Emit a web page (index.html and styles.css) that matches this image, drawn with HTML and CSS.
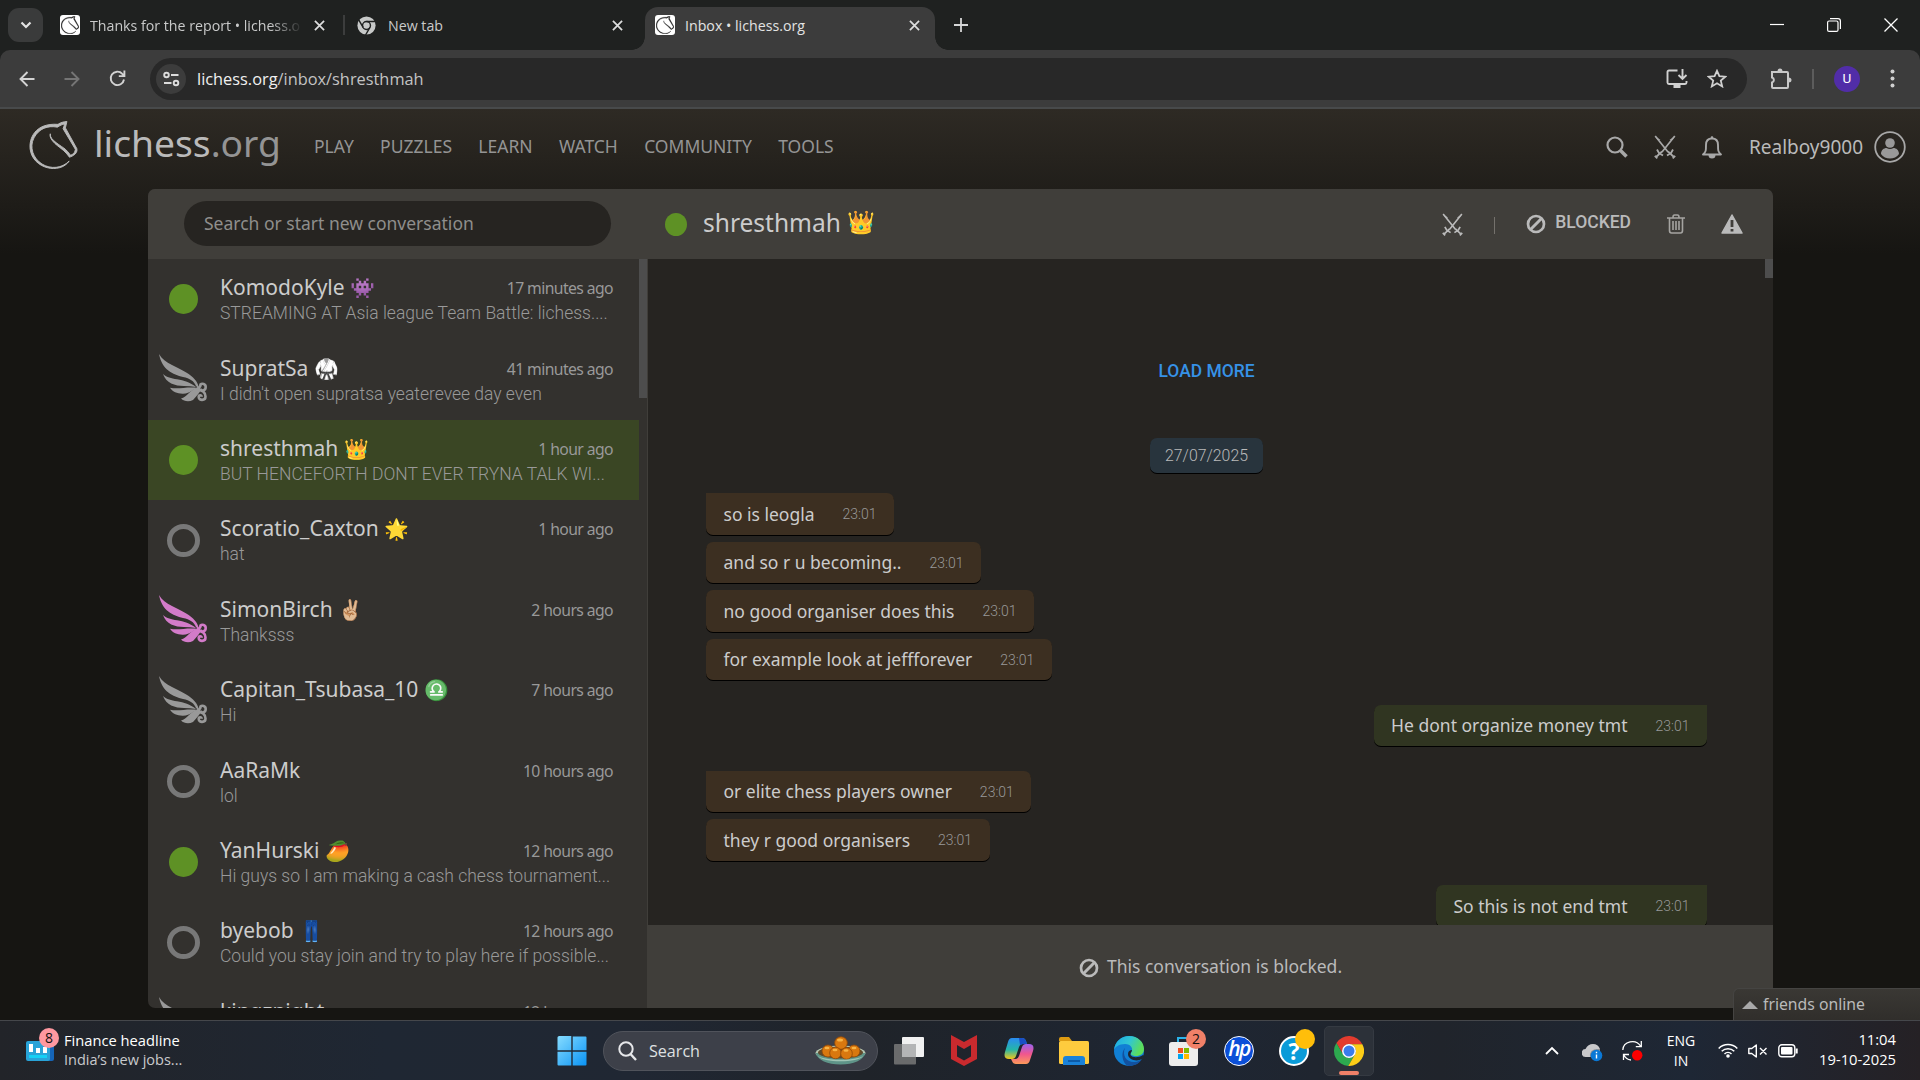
FILE: index.html
```html
<!DOCTYPE html>
<html lang="en">
<head>
<meta charset="utf-8">
<title>Inbox • lichess.org</title>
<link rel="stylesheet" href="styles.css">
</head>
<body>
<svg class="defs" aria-hidden="true">
  <symbol id="horse" viewBox="0 0 50 50"><path stroke-linejoin="round" d="M38.956.5c-3.53.418-6.452.902-9.286 2.984C5.534 1.786-.692 18.533.68 29.364 3.493 50.214 31.918 55.785 41.329 41.7c-7.444 7.696-19.276 8.752-28.323 3.084C3.959 39.116-.506 27.392 4.683 17.567 9.873 7.742 18.996 4.535 29.03 6.405c2.43-1.418 5.225-3.22 7.655-3.187l-1.694 4.86 12.752 21.37c-.439 5.654-5.459 6.112-5.459 6.112-.574-1.47-1.634-2.942-4.842-6.036-3.207-3.094-17.465-10.177-15.788-16.207-2.001 6.967 10.311 14.152 14.04 17.663 3.73 3.51 5.426 6.04 5.795 6.756 0 0 9.392-2.504 7.838-8.927L37.4 7.171z"/></symbol>
  <symbol id="x" viewBox="0 0 12 12"><path d="M1 1l10 10M11 1L1 11" fill="none" stroke="currentColor" stroke-width="1.9"/></symbol>
  <symbol id="swords" viewBox="0 0 22 24"><path d="M1.200 1L14 17M20.800 1L8 17" fill="none" stroke="currentColor" stroke-width="1.700"/><path d="M1 1l5.500 4L3.500 5zM21 1l-5.500 4 3 0z" fill="currentColor"/><path d="M3 14.500l2 3.500 4 2.500M19 14.500l-2 3.500-4 2.500M8 16.500l-6.500 6M14 16.500l6.500 6M.800 20.800l2.500 2.500M21.200 20.800l-2.500 2.500" fill="none" stroke="currentColor" stroke-width="1.800"/></symbol>
  <symbol id="ban" viewBox="0 0 20 20"><circle cx="10" cy="10" r="8" fill="none" stroke="currentColor" stroke-width="2.700"/><path d="M4.800 15.200L15.200 4.800" stroke="currentColor" stroke-width="3"/></symbol>
  <symbol id="wing" viewBox="0 0 49 48"><g fill="currentColor"><path d="M0 0c3 5 7 8 13 11 8 4 16 7.500 21 12.500 4 4 5 6 6 11l-3-2.500c-2-5-6-7.500-13-9C14 20.500 3 16 0 0z"/><path d="M4 20c4 3.500 8 4.300 14 5.300 7 1.200 13 3 19 7.700-4-.8-8-1-12-1-9 0-18-3-21-12z"/><path d="M11 33.800c9 1.700 17-1.300 28 .2-5 .7-7 5.500-15 5.700-6 .1-10-1.700-13-5.900z"/><path d="M22 44.500c6-1.500 9-9 17-11l3 2.500c-2 3-5 7-8 10-4 2-9 1.500-12-1.500z"/></g><path d="M38 34.800c1.500-.8 4-1.800 3.500-4.300 1.500-1.500 5.200-.8 5.200 2.500 0 4-5 4.500-5.200 1.500M38 35.500c5 .5 8.500 3 8.500 7 0 4.500-6.800 4.300-6.800.5 0-2.200 3-2.200 3-.3" fill="none" stroke="currentColor" stroke-width="2.600"/></symbol>
</svg>

<header class="tabs">
  <button class="tab-search"><svg width="12" height="8" viewBox="0 0 12 8"><path d="M1.500 1.500L6 6l4.500-4.500" fill="none" stroke="#e3e3e3" stroke-width="2.200"/></svg></button>
  <div class="tab tab-first"><span class="fav"><svg width="18" height="18"><use href="#horse"/></svg></span><span class="tab-title fade">Thanks for the report • lichess.o</span><svg class="tx"><use href="#x"/></svg></div>
  <i class="tab-sep"></i>
  <div class="tab tab-second"><svg width="19" height="19" viewBox="0 0 24 24"><circle cx="12" cy="12" r="11.500" fill="#c7c9c8"/><circle cx="12" cy="12" r="5" fill="none" stroke="#1f2120" stroke-width="1.800"/><path d="M12 7h11M7.700 14.500L2.200 5M16.300 14.500L10.800 24" stroke="#1f2120" stroke-width="1.800"/></svg><span class="tab-title t2">New tab</span><svg class="tx"><use href="#x"/></svg></div>
  <div class="tab tab-active"><span class="fav"><svg width="18" height="18"><use href="#horse"/></svg></span><span class="tab-title t3">Inbox • lichess.org</span><svg class="tx"><use href="#x"/></svg></div>
  <svg class="tab-new" width="14" height="14" viewBox="0 0 14 14"><path d="M7 0v14M0 7h14" stroke="#d5d6d6" stroke-width="1.800"/></svg>
  <div class="win">
    <svg width="14" height="14" viewBox="0 0 14 14"><path d="M0 6.500h14" stroke="#fff" stroke-width="1.200"/></svg>
    <svg width="14" height="14" viewBox="0 0 14 14"><rect x=".6" y="3" width="10.400" height="10.400" rx="1.500" fill="none" stroke="#fff" stroke-width="1.200"/><path d="M3 .6h8q2.400 0 2.400 2.400v8" fill="none" stroke="#fff" stroke-width="1.200"/></svg>
    <svg width="14" height="14" viewBox="0 0 14 14"><path d="M.5 .5l13 13M13.500 .5l-13 13" stroke="#fff" stroke-width="1.300"/></svg>
  </div>
</header>

<div class="toolbar">
  <svg class="nav-back" width="16" height="16" viewBox="0 0 16 16"><path d="M15.500 8H2M8.500 1L1.500 8l7 7" fill="none" stroke="#d3d3d3" stroke-width="1.900"/></svg>
  <svg class="nav-fwd" width="16" height="16" viewBox="0 0 16 16"><path d="M.5 8H14M7.500 1l7 7-7 7" fill="none" stroke="#757575" stroke-width="1.900"/></svg>
  <svg class="nav-reload" width="17" height="17" viewBox="0 0 17 17"><path d="M15 9.500A6.700 6.700 0 1 1 13.300 3.800L15 5.500M15.400 .5v5.600H9.800" fill="none" stroke="#d3d3d3" stroke-width="1.900"/></svg>
  <div class="omnibox">
    <span class="site-info"><svg width="17" height="16" viewBox="0 0 17 16"><g fill="none" stroke="#dcdcdc" stroke-width="1.900"><circle cx="3.500" cy="4" r="2.300"/><path d="M8 4h7.500M1 12h7.500"/><circle cx="13" cy="12" r="2.300"/></g></svg></span>
    <span class="url"><b>lichess.org</b>/inbox/shresthmah</span>
    <svg class="install" width="22" height="19" viewBox="0 0 22 19"><path d="M11.500 1.500H3q-1.500 0-1.500 1.500v10.500q0 1.500 1.500 1.500h16q1.500 0 1.500-1.500V12M16.500 0v9.500M12.500 6l4 4 4-4" fill="none" stroke="#d0d0d0" stroke-width="1.900"/><path d="M7.500 15h7v4h-7z" fill="#d0d0d0"/></svg>
    <svg class="star" width="20" height="19" viewBox="0 0 20 19"><path d="M10 1.800l2.400 5.400 5.900.5-4.500 3.900 1.400 5.800-5.200-3.100-5.200 3.100 1.400-5.800L1.700 7.700l5.900-.5z" fill="none" stroke="#d0d0d0" stroke-width="1.800"/></svg>
  </div>
  <svg class="ext" width="22" height="22" viewBox="0 0 22 22"><path d="M2.500 4h14.500q1 0 1 1v14q0 1-1 1H3q-1 0-1-1v-4.500a2.600 2.600 0 0 0 0-5V4z" fill="none" stroke="#c8c8c8" stroke-width="2"/><path d="M7.500 3.500a2.500 3 0 0 1 5 0zM18.500 9.500a3 2.500 0 0 1 0 5z" fill="#c8c8c8"/></svg>
  <i class="bar-sep"></i>
  <span class="avatar">U</span>
  <svg class="dots" width="5" height="19" viewBox="0 0 5 19"><g fill="#d0d0d0"><circle cx="2.500" cy="2.500" r="2"/><circle cx="2.500" cy="9.500" r="2"/><circle cx="2.500" cy="16.500" r="2"/></g></svg>
</div>

<div class="site">
  <header class="top">
    <svg class="logo" width="49" height="48"><use href="#horse"/></svg>
    <span class="brand">lichess<span>.org</span></span>
    <nav><span>Play</span><span>Puzzles</span><span>Learn</span><span>Watch</span><span>Community</span><span>Tools</span></nav>
    <div class="top-right">
      <svg width="22" height="22" viewBox="0 0 22 22"><circle cx="9" cy="9" r="7.500" fill="none" stroke="currentColor" stroke-width="2.200"/><path d="M14.500 14.500l6 6" stroke="currentColor" stroke-width="3.600"/></svg>
      <svg width="22" height="24"><use href="#swords"/></svg>
      <svg width="22" height="24" viewBox="0 0 22 24"><path d="M2 19.500c3-2.500 3-4 3-9.500 0-4 2-6.500 6-6.500S17 6 17 10c0 5.500 0 7 3 9.500z" fill="none" stroke="currentColor" stroke-width="1.900" stroke-linejoin="round"/><path d="M9.500 3.500a1.500 2.500 0 0 1 3 0zM7.500 20h7a3.500 3.500 0 0 1-7 0z" fill="currentColor"/></svg>
      <span class="me">Realboy9000</span>
      <svg width="32" height="32" viewBox="0 0 32 32"><circle cx="16" cy="16" r="14.800" fill="none" stroke="currentColor" stroke-width="1.800"/><circle cx="16" cy="12" r="4.800" fill="#999"/><path d="M7 23c0-4 3-6 5.500-6q3.500 2 7 0c2.500 0 5.500 2 5.500 6-4 6-14 6-18 0z" fill="#999"/></svg>
    </div>
  </header>

  <main class="inbox">
    <section class="side">
      <div class="side-head"><div class="search">Search or start new conversation</div></div>
      <div class="list">
        <div class="rows">
          <div class="row"><i class="dot"></i><div class="info"><p class="l1"><b>KomodoKyle <em>👾</em></b><time>17 minutes ago</time></p><p class="l2">STREAMING AT Asia league Team Battle: lichess....</p></div></div>
          <div class="row"><svg class="wing"><use href="#wing"/></svg><div class="info"><p class="l1"><b>SupratSa <em>🥋</em></b><time>41 minutes ago</time></p><p class="l2">I didn't open supratsa yeaterevee day even</p></div></div>
          <div class="row active"><i class="dot"></i><div class="info"><p class="l1"><b>shresthmah <em>👑</em></b><time>1 hour ago</time></p><p class="l2">BUT HENCEFORTH DONT EVER TRYNA TALK WI...</p></div></div>
          <div class="row"><i class="ring"></i><div class="info"><p class="l1"><b>Scoratio_Caxton <em>🌟</em></b><time>1 hour ago</time></p><p class="l2">hat</p></div></div>
          <div class="row"><svg class="wing patron"><use href="#wing"/></svg><div class="info"><p class="l1"><b>SimonBirch <em>✌🏼</em></b><time>2 hours ago</time></p><p class="l2">Thanksss</p></div></div>
          <div class="row"><svg class="wing"><use href="#wing"/></svg><div class="info"><p class="l1"><b>Capitan_Tsubasa_10 <em>♎</em></b><time>7 hours ago</time></p><p class="l2">Hi</p></div></div>
          <div class="row"><i class="ring"></i><div class="info"><p class="l1"><b>AaRaMk</b><time>10 hours ago</time></p><p class="l2">lol</p></div></div>
          <div class="row"><i class="dot"></i><div class="info"><p class="l1"><b>YanHurski <em>🥭</em></b><time>12 hours ago</time></p><p class="l2">Hi guys so I am making a cash chess tournament...</p></div></div>
          <div class="row"><i class="ring"></i><div class="info"><p class="l1"><b>byebob <em>👖</em></b><time>12 hours ago</time></p><p class="l2">Could you stay join and try to play here if possible...</p></div></div>
          <div class="row"><svg class="wing"><use href="#wing"/></svg><div class="info"><p class="l1"><b>kingznight</b><time>12 hours ago</time></p></div></div>
        </div>
        <div class="track"><i class="thumb"></i></div>
      </div>
    </section>

    <section class="convo">
      <div class="convo-head">
        <i class="dot small"></i><h1>shresthmah <em>👑</em></h1>
        <div class="actions">
          <svg width="21" height="23"><use href="#swords"/></svg><i class="act-sep"></i>
          <svg class="ban" width="20" height="20"><use href="#ban"/></svg><span class="blocked">BLOCKED</span>
          <svg class="trash" width="18" height="20" viewBox="0 0 18 20"><path d="M0 4h18M6 3.500q0-2.500 1.500-2.500h3q1.500 0 1.500 2.500M2.500 4v12.500q0 2.500 2 2.500h9q2 0 2-2.500V4M6 7v9M9 7v9M12 7v9" fill="none" stroke="currentColor" stroke-width="1.600"/></svg>
          <svg class="warn" width="22" height="20" viewBox="0 0 22 20"><path d="M11 1l10 18H1z" fill="currentColor" stroke="currentColor" stroke-width="1.500" stroke-linejoin="round"/><path d="M11 6v7M11 15v2.600" stroke="#403e3a" stroke-width="2.800"/></svg>
        </div>
      </div>
      <div class="thread">
        <div class="msgs">
          <a class="more">LOAD MORE</a>
          <span class="day">27/07/2025</span>
          <div class="msg first">so is leogla<time>23:01</time></div>
          <div class="msg">and so r u becoming..<time>23:01</time></div>
          <div class="msg">no good organiser does this<time>23:01</time></div>
          <div class="msg">for example look at jeffforever<time>23:01</time></div>
          <div class="msg mine">He dont organize money tmt<time>23:01</time></div>
          <div class="msg first turn">or elite chess players owner<time>23:01</time></div>
          <div class="msg">they r good organisers<time>23:01</time></div>
          <div class="msg mine">So this is not end tmt<time>23:01</time></div>
        </div>
        <div class="track"><i class="thumb"></i></div>
      </div>
      <div class="notice"><svg width="20" height="20"><use href="#ban"/></svg>This conversation is blocked.</div>
    </section>
  </main>
  <div class="friends"><i></i>friends online</div>
</div>

<footer class="taskbar">
  <div class="widget">
    <div class="wicon"><svg width="29" height="22" viewBox="0 0 29 22"><rect x="12" y="2" width="16" height="19" rx="2" fill="#1565b8"/><rect x="0" y="1" width="24" height="20" rx="2" fill="#29a3d8"/><path d="M3 4h4v8H3zM10 8h4v5h-4zM17 7h4v6h-4z" fill="#fff"/><path d="M3 15h18v3H3z" fill="#14d0f5"/></svg><span class="badge pink">8</span></div>
    <div class="wtext"><span class="head">Finance headline</span><span class="dim">India’s new jobs...</span></div>
  </div>
  <svg class="start" width="30" height="30" viewBox="0 0 30 30"><defs><linearGradient id="wg" x1="0" y1="0" x2="1" y2="1" ><stop offset="0" stop-color="#86dcff"/><stop offset="1" stop-color="#0a93f5"/></linearGradient></defs><path d="M1.500 0H14.300V14.300H.5V1.500Q.5 .5 1.500 .5zM15.700 .5H28.500Q29.500 .5 29.500 1.500V14.300H15.700zM.5 15.700H14.300V29.500H1.500Q.5 29.500 .5 28.500zM15.700 15.700H29.500V28.500Q29.500 29.500 28.500 29.500H15.700z" fill="url(#wg)"/></svg>
  <div class="tsearch">
    <svg width="19" height="20" viewBox="0 0 19 20"><circle cx="8" cy="8" r="6.700" fill="none" stroke="#e6e7ea" stroke-width="2"/><path d="M12.500 13l5.500 6" stroke="#e6e7ea" stroke-width="2.400"/></svg>
    <span>Search</span>
    <svg class="bowl" width="51" height="29" viewBox="0 0 51 29"><ellipse cx="25.500" cy="17" rx="25" ry="7.500" fill="#b9c9b4"/><path d="M.5 17h50c-2 7-12 11.500-25 11.500S2.500 24 .5 17z" fill="#5f9488"/><ellipse cx="25.500" cy="16.500" rx="22.500" ry="6" fill="#5f4a2c"/><g fill="#d9780f" stroke="#8f4708" stroke-width=".8"><circle cx="26" cy="7" r="6.300"/><circle cx="13" cy="15" r="6"/><circle cx="39" cy="15" r="6"/><circle cx="20.500" cy="17" r="5.800"/><circle cx="31.500" cy="17.500" r="5.800"/></g><g fill="#f8b445"><ellipse cx="25" cy="4" rx="3" ry="1.500"/><ellipse cx="12" cy="12" rx="2.500" ry="1.300"/><ellipse cx="20" cy="14" rx="2.500" ry="1.300"/><ellipse cx="31" cy="14.500" rx="2.500" ry="1.300"/><ellipse cx="39" cy="12" rx="2.500" ry="1.300"/></g><path d="M3 20c8 5 37 5 45 0-4 7-41 7-45 0z" fill="#9fc4b4"/></svg>
  </div>
  <div class="apps">
    <svg width="30" height="28" viewBox="0 0 30 28"><rect x="8" y="0" width="22" height="20" rx="1" fill="#f1f1f1"/><rect x="0" y="7" width="22" height="20.500" rx="1" fill="#6a6b6c"/><path d="M8 7h14v13H8z" fill="#b4b5b6"/></svg>
    <svg width="26" height="31" viewBox="0 0 26 31"><path d="M0 0l13 7 13-7v24l-13 7-13-7zM6 10v11.500l7 4 7-4V10l-7 4z" fill="#c92a2e" fill-rule="evenodd"/></svg>
    <svg width="30" height="28" viewBox="0 0 30 28"><defs><linearGradient id="ca" x1="0" y1="0" x2="0" y2="1"><stop offset="0" stop-color="#2a8bf2"/><stop offset=".55" stop-color="#25b6a8"/><stop offset="1" stop-color="#f3c71a"/></linearGradient><linearGradient id="cb" x1="0" y1="0" x2="0" y2="1"><stop offset="0" stop-color="#9a62ee"/><stop offset=".5" stop-color="#f0568e"/><stop offset="1" stop-color="#fc9a5a"/></linearGradient></defs><path d="M8 1h10q3 0 4 3l1 3h-4q-3 0-4 3l-3 9q-1 3-4 3H5q-6 0-4-7L4 5q1-4 4-4z" fill="url(#ca)"/><path d="M22 27H12q-3 0-4-3l-1-2h4q3 0 4-3l3-9q1-3 4-3h3q6 0 4 7l-3 9q-1 4-4 4z" fill="url(#cb)"/><path d="M15 1h3q3 0 4 3l1 3h-4l-3 1z" fill="#1a4fc5"/></svg>
    <svg width="30" height="28" viewBox="0 0 30 28"><path d="M0 2q0-2 2-2h8l3 4H0z" fill="#dd9b12"/><rect y="4" width="30" height="23" rx="1.500" fill="#fecb3e"/><path d="M4 28v-6q0-3 3-3h16q3 0 3 3v6z" fill="#1a82d8"/><path d="M9 24h12" stroke="#0c5ba8" stroke-width="2"/></svg>
    <svg width="30" height="30" viewBox="0 0 30 30"><defs><linearGradient id="ed" x1="0" y1="0" x2="1" y2=".35"><stop offset="0" stop-color="#1ba8e6"/><stop offset=".55" stop-color="#31c6d3"/><stop offset="1" stop-color="#5cdd5a"/></linearGradient></defs><circle cx="15" cy="15" r="15" fill="#117fd4"/><path d="M0 14C1 5 8 0 15 0c9 0 15 6 15 13 0 5-4 7-8 7-3 0-6-1-5-3 3-4 0-9-6-9-6 0-10 3-11 6z" fill="url(#ed)"/><path d="M11 12c-3 7 1 14 9 14 4 0 6-2 8-3-3 5-8 7-13 7C9 29 6 17 11 12z" fill="#12519f"/><path d="M18 14c0 2-2 3-1.500 5 2 3 8 3 12.500 0l1 1-2 3c-5 3-14 1-14-5 0-3 2-4 4-4z" fill="#1f252f"/></svg>
    <div class="app"><svg width="30" height="30" viewBox="0 0 30 30"><path d="M9 8V2h12v6" fill="none" stroke="#2bb3ea" stroke-width="2"/><rect y="6" width="29" height="24" rx="3" fill="#ededed"/><path d="M9 12h5v5H9z" fill="#f25022"/><path d="M15 12h5v5h-5z" fill="#7fba00"/><path d="M9 18h5v5H9z" fill="#00a4ef"/><path d="M15 18h5v5h-5z" fill="#ffb900"/></svg><span class="badge coral">2</span></div>
    <div class="hp">hp</div>
    <div class="app"><div class="help">?</div><span class="badge gold"></span></div>
  </div>
  <div class="chrome"><svg width="30" height="30" viewBox="0 0 24 24"><path fill="#e33b2e" d="M12 6.500H22.670A12 12 0 0 0 1.910 5.510L7.240 14.750A5.500 5.500 0 0 1 12 6.500z"/><path fill="#2da94f" d="M7.240 14.750L1.910 5.510A12 12 0 0 0 11.420 23.980L16.760 14.750A5.500 5.500 0 0 1 7.240 14.750z"/><path fill="#fdcd17" d="M16.760 14.750L11.420 23.980A12 12 0 0 0 22.670 6.500H12A5.500 5.500 0 0 1 16.760 14.750z"/><circle cx="12" cy="12" r="5.600" fill="#fff"/><circle cx="12" cy="12" r="4.400" fill="#3a7cec"/></svg><i></i></div>
  <div class="tray">
    <svg width="14" height="9" viewBox="0 0 14 9"><path d="M1 8l6-6 6 6" fill="none" stroke="#fff" stroke-width="1.800"/></svg>
    <svg class="cloud" width="21" height="19" viewBox="0 0 21 19"><path d="M4 14a4 4 0 0 1-.5-8Q6 1 11 1q5 0 7 5v8z" fill="#c9c9cb"/><path d="M8 14q-1-9 10-8v8z" fill="#8f9093"/><circle cx="14.500" cy="12.500" r="5.800" fill="#0a78d6"/><path d="M14.500 11.500v4M14.500 8.800v1.500" stroke="#fff" stroke-width="1.400"/></svg>
    <svg class="sync" width="21" height="21" viewBox="0 0 21 21"><path d="M.8 10A9.500 8.800 0 0 1 18.500 6M19.300 1v5.600h-5.500M1.500 20v-5.500H7M1.800 15A9 9 0 0 0 9 20" fill="none" stroke="#fff" stroke-width="1.300"/><circle cx="15.200" cy="15.300" r="5.200" fill="#fe0000"/></svg>
    <div class="lang"><span>ENG</span><span>IN</span></div>
    <svg class="wifi" width="20" height="15" viewBox="0 0 20 15"><g fill="none" stroke="#fff" stroke-width="1.500"><path d="M.7 5.500a13 13 0 0 1 18.600 0M3.700 8.300a9 9 0 0 1 12.600 0M6.500 11a5 5 0 0 1 7 0"/></g><circle cx="10" cy="13" r="1.800" fill="#fff"/></svg>
    <svg class="mute" width="20" height="14" viewBox="0 0 20 14"><path d="M.8 4.500h3L8.300 1v12L3.800 9.500h-3zM12 4l6.500 6.500M18.500 4L12 10.500" fill="none" stroke="#fff" stroke-width="1.400" stroke-linejoin="round"/></svg>
    <svg class="batt" width="20" height="14" viewBox="0 0 20 14"><rect x=".8" y=".8" width="16" height="12" rx="3" fill="none" stroke="#fff" stroke-width="1.400"/><rect x="3" y="3" width="11.500" height="7.600" rx="1" fill="#fff"/><path d="M18.700 4.500v5" stroke="#fff" stroke-width="2"/></svg>
    <div class="clock"><span>11:04</span><span>19-10-2025</span></div>
  </div>
</footer>
</body>
</html>
```
FILE: styles.css
```css
* { box-sizing: border-box; }
body {
  margin: 0; width: 1920px; height: 1080px; overflow: hidden;
  display: flex; flex-direction: column;
  background: linear-gradient(#1f2120, #1f2120) 0 0 / 100% 62px no-repeat #161512; color: #bababa;
  font: 17.5px/1.5 "Noto Sans", sans-serif;
}
svg { display: block; flex: none; }
.defs { position: absolute; width: 0; height: 0; }
i, em { font-style: normal; }
p, h1 { margin: 0; font-weight: 400; }

/* browser tabs */
.tabs {
  height: 50px; flex: none; display: flex; align-items: center;
  background: #1f2120; font: 14.2px/20px "Open Sans", sans-serif; color: #c9caca;
}
.tab-search {
  width: 35px; height: 34px; margin-left: 8px; padding: 0; border: 0; border-radius: 11px;
  background: #3a3b3b; display: flex; align-items: center; justify-content: center;
}
.tab { display: flex; align-items: center; }
.tab-first { margin-left: 17px; width: 265px; }
.fav { width: 20px; height: 20px; border-radius: 3px; background: #fff; display: flex; align-items: center; justify-content: center; flex: none; }
.fav svg { fill: #222; stroke: #222; stroke-width: 1; }
.tab-title { margin-left: 10px; padding-top: 1px; white-space: nowrap; flex: none; }
.fade { width: 212px; -webkit-mask-image: linear-gradient(90deg, #000 180px, transparent 213px); mask-image: linear-gradient(90deg, #000 180px, transparent 213px); }
.tx { width: 11px; height: 11px; margin-left: auto; color: #dcdddd; }
.tab-sep { width: 2px; height: 20px; margin-left: 18px; background: #3c3d3d; }
.tab-second { margin-left: 12px; width: 266px; }
.t2 { margin-left: 12px; }
.tab-active {
  position: relative; align-self: flex-end; width: 290px; height: 43px; margin-left: 22px; padding: 0 15px 7px 10px;
  border-radius: 13px 13px 0 0; background: #3c3c3c; color: #e3e3e3;
}
.tab-active::before, .tab-active::after {
  content: ""; position: absolute; bottom: 0; width: 13px; height: 13px;
}
.tab-active::before { left: -13px; background: radial-gradient(circle at 0 0, transparent 12.500px, #3c3c3c 13px); }
.tab-active::after { right: -13px; background: radial-gradient(circle at 100% 0, transparent 12.500px, #3c3c3c 13px); }
.tab-new { margin-left: 19px; }
.win { margin-left: auto; margin-right: 22px; display: flex; gap: 43px; }

/* browser toolbar */
.toolbar {
  height: 59px; flex: none; display: flex; align-items: center;
  background: #3c3c3c; border-bottom: 2px solid #484a4b; border-radius: 10px 10px 0 0;
}
.nav-back { margin-left: 19px; }
.nav-fwd { margin-left: 29px; }
.nav-reload { margin-left: 29px; }
.omnibox {
  width: 1597px; height: 42px; margin-left: 24px; padding: 0 20px 0 6px; border-radius: 21px;
  background: #282828; display: flex; align-items: center;
}
.site-info { width: 30px; height: 30px; border-radius: 50%; background: #3c3c3c; display: flex; align-items: center; justify-content: center; }
.url { margin-left: 11px; padding-top: 1px; font: 16.35px/24px "Open Sans", sans-serif; color: #c3c3c3; }
.url b { font-weight: 400; color: #f0f0f0; }
.install { margin-left: auto; }
.star { margin-left: 19px; }
.ext { margin-left: 23px; }
.bar-sep { width: 2px; height: 20px; margin-left: 20px; background: #5c5c5c; }
.avatar { width: 26px; height: 26px; margin-left: 20px; border-radius: 50%; background: #512da8; color: #fff; font: 13.500px/25px Roboto, sans-serif; text-align: center; }
.dots { margin-left: 30px; }

/* site */
.site {
  position: relative; height: 911px; flex: none; overflow: hidden;
  background: linear-gradient(#2e2a24, #161512 145px);
}
.top { height: 80px; display: flex; align-items: center; padding: 0 14px 5px 29px; }
.logo { fill: #bababa; stroke: #bababa; margin-top: -3px; }
.brand { margin-left: 16px; width: 220px; font-size: 37.2px; line-height: 50px; margin-top: -8px; }
.brand span { color: #949494; }
nav { display: flex; gap: 26.3px; text-transform: uppercase; color: #949494; font-size: 17.5px; }
.top-right { margin-left: auto; display: flex; align-items: center; color: #a8a8a8; }
.top-right svg { margin-right: 25.500px; }
.me { font-size: 19px; color: #bababa; margin-right: 11px; padding-top: 1px; }
.top-right svg:last-child { margin: 0; }

.inbox { width: 1625px; height: 819px; margin-left: 148px; display: flex; border-radius: 7px 7px 0 7px; overflow: hidden; }
.side { width: 500px; display: flex; flex-direction: column; background: #33312e; border-right: 1px solid #403e3a; }
.side-head { height: 70px; padding: 12px 36px 13px; background: #403e3a; }
.search { height: 45px; border-radius: 23px; padding-left: 20px; background: #262421; color: #8f8e8c; line-height: 45px; }
.list { flex: 1; min-height: 0; display: flex; }
.rows { flex: 1; min-width: 0; overflow: hidden; }
.track { width: 8px; flex: none; }
.thumb { display: block; height: 139px; background: #4d4d4d; }
.row { height: 80.4px; display: flex; align-items: center; padding: 0 26px 0 12px; }
.row.active { background: #3a4624; }
.dot { width: 29px; height: 30px; margin: 0 22px 0 9px; border-radius: 50%; background: #5e9125; flex: none; }
.ring { width: 33px; height: 33px; margin: 0 20px 0 7px; border-radius: 50%; border: 5px solid #787878; flex: none; }
.wing { width: 49px; height: 48px; margin: -3px 12px 0 -1px; color: #999; }
.patron { color: #d37bc9; }
.info { flex: 1; min-width: 0; height: 54px; }
.l1 { display: flex; justify-content: space-between; align-items: baseline; line-height: 30px; height: 30px; white-space: nowrap; }
.l1 b { font-weight: 400; font-size: 21px; color: #ccc; }
.l1 time { font-size: 15.75px; letter-spacing: -.6px; color: #999; position: relative; top: -1px; }
.l2 { font: 300 17.5px/24px Roboto, sans-serif; color: #999; white-space: nowrap; height: 24px; margin-top: -1px; }
em { font-family: "Noto Sans", sans-serif; }
.l1 em { font-size: 20px; }

.convo { flex: 1; display: flex; flex-direction: column; background: #262421; }
.convo-head { height: 70px; padding: 0 30px 0 17px; display: flex; align-items: center; background: #403e3a; }
.small { width: 22px; height: 23px; margin: 0 16px 0 0; }
.convo-head h1 { font-size: 24.5px; line-height: 36px; color: #ccc; margin-top: -1px; }
.convo-head h1 em { font-size: 22.500px; position: relative; top: -2px; }
.actions { margin-left: auto; display: flex; align-items: center; color: #bababa; }
.act-sep { width: 1px; height: 17px; margin: 2px 31px 0 31px; background: #74716c; }
.blocked { margin: -4px 36px 0 9px; font: 500 17.5px/24px Roboto, sans-serif; }
.trash { margin-right: 36px; color: #a5a4a1; }
.thread { height: 666px; display: flex; }
.msgs { flex: 1; padding: 99px 58px 0; display: flex; flex-direction: column; align-items: flex-start; overflow: hidden; }
.thread .thumb { height: 19px; }
.more { align-self: center; color: #3692e7; font: 500 17.45px/27px Roboto, sans-serif; margin-bottom: 53px; }
.day { align-self: center; height: 35px; padding: 0 15.500px; margin-bottom: 20px; border-radius: 7px; background: #28343d; box-shadow: 0 1px 0 #000; font: 300 15.86px/35px Roboto, sans-serif; color: #bababa; }
.msg {
  height: 41.5px; margin-bottom: 7px; padding: 0 17.5px; flex: none; display: flex; align-items: center;
  border-radius: 7px; background: #3c2f21; box-shadow: 0 1px 0 #000; color: #ccc; line-height: 42px;
}
.msg time { margin-left: 28px; padding-top: 1px; font: 300 14px/42px Roboto, sans-serif; color: #999; }
.first { border-top-left-radius: 0; }
.turn { margin-top: 17.5px; }
.mine { align-self: flex-end; margin-top: 17.5px; background: #303521; border-top-right-radius: 0; }
.notice { height: 83px; display: flex; align-items: center; justify-content: center; gap: 8px; background: #403e3a; }
.notice svg { margin-top: 2px; }
.friends {
  position: absolute; right: 0; bottom: 0; width: 187px; height: 32px; padding-left: 8px;
  display: flex; align-items: center; border: solid #454442; border-width: 1px 0 0 1px; border-top-left-radius: 6px;
  background: linear-gradient(#3a3834, #302e2b); font-size: 15.75px;
}
.friends i { margin-right: 5px; border: solid transparent; border-width: 0 8.500px 8px; border-bottom-color: #a9a9a9; }

/* taskbar */
.taskbar {
  height: 60px; flex: none; display: flex; align-items: center; border-top: 1px solid #45474b;
  background: linear-gradient(90deg, #222429, #1f2733 20%, #202733 33%, #1f2329 45%, #1e2633 62%, #20242b 75%, #1e2735 88%, #252125 100%);
  color: #fff; font: 14.4px/20px "Open Sans", sans-serif;
}
.widget { width: 557px; padding-left: 26px; display: flex; align-items: center; }
.wicon { position: relative; width: 29px; }
.badge { position: absolute; border-radius: 50%; width: 20px; height: 20px; color: #111; text-align: center; font-size: 14px; line-height: 20px; }
.pink { right: -4px; top: -12px; background: #ff98a0; }
.wtext { display: flex; flex-direction: column; margin-left: 9px; margin-top: -2px; }
.head { font-size: 14.7px; }
.dim { color: #c9cacc; font-size: 14.5px; }
.tsearch {
  width: 275px; height: 40px; margin-left: 16px; padding: 0 11px 0 14px; border-radius: 20px;
  border: 1px solid #50535b; background: #3d4049; display: flex; align-items: center; font-size: 16.1px; color: #dfe0e2;
}
.tsearch span { margin-left: 12px; }
.bowl { margin-left: auto; }
.apps { margin-left: 16px; display: grid; grid-template-columns: repeat(8, 55px); align-items: center; width: 430px; }
.apps > * { justify-self: start; }
.apps > svg:nth-child(2) { margin-left: 2px; }
.app { position: relative; }
.coral { left: 17px; top: -7px; background: #f08068; }
.gold { left: 16px; top: -7px; background: #ffbe0a; }
.hp { width: 30px; height: 30px; border-radius: 50%; border: 1.5px solid #fff; background: #0b4fd8; color: #fff; font: italic 600 21px/23px "Open Sans", sans-serif; text-align: center; letter-spacing: -1.5px; }
.help { width: 30px; height: 30px; border-radius: 50%; border: 2px solid #fff; background: #0a9bd8; color: #fff; font: 700 23px/26px "Open Sans", sans-serif; text-align: center; }
.chrome { width: 50px; height: 50px; border-radius: 5px; background: #2c3139; border: 1px solid #353a42; display: flex; flex-direction: column; align-items: center; padding-top: 9px; }
.chrome i { width: 20px; height: 4px; border-radius: 2px; margin-top: 5px; background: #f08068; }
.tray { margin-left: auto; margin-right: 24px; display: flex; align-items: center; }
.cloud { margin-left: 23px; margin-top: 3px; }
.sync { margin-left: 19px; }
.lang { width: 28px; margin-left: 24px; display: flex; flex-direction: column; align-items: center; font-size: 14px; }
.wifi { margin-left: 23px; }
.mute { margin-left: 10px; }
.batt { margin-left: 10px; }
.clock { width: 78px; margin-left: 20px; margin-top: -3px; display: flex; flex-direction: column; align-items: flex-end; white-space: nowrap; font-size: 14.75px; }
```
